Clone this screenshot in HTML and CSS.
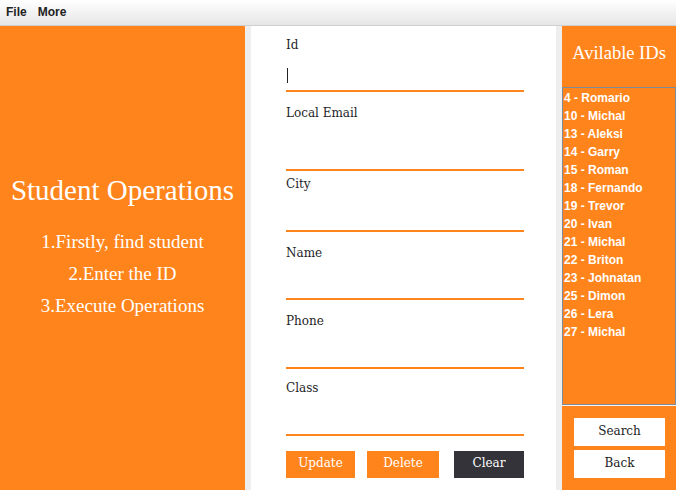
FILE: index.html
```html
<!DOCTYPE html>
<html>
<head>
<meta charset="utf-8">
<link rel="stylesheet" href="styles.css">
</head>
<body>
<div class="menubar">
  <span class="menu-item">File</span>
  <span class="menu-item">More</span>
</div>
<div class="main">
  <section class="intro">
    <h1 class="intro-title">Student Operations</h1>
    <ol class="steps">
      <li>1.Firstly, find student</li>
      <li>2.Enter the ID</li>
      <li>3.Execute Operations</li>
    </ol>
  </section>
  <div class="strip"></div>
  <section class="form">
    <div class="field"><label>Id</label><div class="input"><span class="caret"></span></div></div>
    <div class="field"><label>Local Email</label><div class="input"></div></div>
    <div class="field"><label>City</label><div class="input"></div></div>
    <div class="field"><label>Name</label><div class="input"></div></div>
    <div class="field"><label>Phone</label><div class="input"></div></div>
    <div class="field"><label>Class</label><div class="input"></div></div>
    <div class="actions">
      <button class="btn btn-update">Update</button>
      <button class="btn btn-delete">Delete</button>
      <button class="btn btn-clear">Clear</button>
    </div>
  </section>
  <div class="strip"></div>
  <aside class="ids">
    <div class="ids-head">Avilable IDs</div>
    <ul class="ids-list">
      <li>4 - Romario</li>
      <li>10 - Michal</li>
      <li>13 - Aleksi</li>
      <li>14 - Garry</li>
      <li>15 - Roman</li>
      <li>18 - Fernando</li>
      <li>19 - Trevor</li>
      <li>20 - Ivan</li>
      <li>21 - Michal</li>
      <li>22 - Briton</li>
      <li>23 - Johnatan</li>
      <li>25 - Dimon</li>
      <li>26 - Lera</li>
      <li>27 - Michal</li>
    </ul>
    <div class="ids-actions">
      <button class="side-btn">Search</button>
      <button class="side-btn">Back</button>
    </div>
  </aside>
</div>
</body>
</html>
```
FILE: styles.css
```css
* { box-sizing: border-box; }
html, body { margin: 0; padding: 0; }
body {
  width: 676px;
  height: 490px;
  overflow: hidden;
  background: #eeeeee;
  font-family: "DejaVu Serif", serif;
}
.menubar {
  height: 26px;
  display: flex;
  align-items: center;
  gap: 11px;
  padding: 0 0 2px 6px;
  background: linear-gradient(#ffffff, #e6e6e6);
  border-bottom: 1px solid #cfcfcf;
}
.menu-item {
  font-family: "Liberation Sans", Arial, sans-serif;
  font-weight: bold;
  font-size: 12px;
  color: #222;
}
.main {
  display: flex;
  height: 464px;
}
.intro {
  width: 245px;
  background: #ff841c;
  color: #fff;
  display: flex;
  flex-direction: column;
  align-items: center;
  padding-top: 147px;
  font-family: "Liberation Serif", Georgia, serif;
}
.intro-title {
  margin: 0;
  font-weight: normal;
  font-size: 29px;
  line-height: 34px;
}
.steps {
  list-style: none;
  margin: 19px 0 0;
  padding: 0;
  text-align: center;
  font-size: 19px;
  line-height: 32px;
}
.strip { width: 6px; background: #eeeeee; }
.form {
  width: 305px;
  background: #ffffff;
  padding: 12px 32px 0 35px;
  display: flex;
  flex-direction: column;
}
.field { display: flex; flex-direction: column; }
.field label {
  font-size: 12px;
  line-height: 14px;
  color: #1e1e28;
}
.input {
  height: 40px;
  border-bottom: 2px solid #ff841c;
  position: relative;
}
.caret {
  position: absolute;
  left: 1px;
  top: 16px;
  width: 1px;
  height: 15px;
  background: #222;
}
.field:nth-child(2) { margin-top: 14px; }
.field:nth-child(2) .input { height: 51px; }
.field:nth-child(3) { margin-top: 6px; }
.field:nth-child(3) .input { height: 41px; }
.field:nth-child(4) { margin-top: 14px; }
.field:nth-child(5) { margin-top: 14px; }
.field:nth-child(5) .input { height: 41px; }
.field:nth-child(6) { margin-top: 12px; }
.field:nth-child(6) .input { height: 41px; }
.actions {
  display: flex;
  margin-top: 15px;
}
.btn {
  height: 27px;
  border: none;
  padding: 0 0 3px;
  font-family: "DejaVu Serif", serif;
  font-size: 12px;
  color: #fff;
}
.btn-update { width: 69px; background: #ff841c; }
.btn-delete { width: 72px; margin-left: 12px; background: #ff841c; }
.btn-clear { width: 70px; margin-left: 15px; background: #333339; }
.ids {
  width: 114px;
  display: flex;
  flex-direction: column;
  background: #ff841c;
}
.ids-head {
  height: 61px;
  display: flex;
  align-items: center;
  justify-content: center;
  color: #fff;
  font-family: "Liberation Serif", Georgia, serif;
  font-size: 18.5px;
  padding-bottom: 6px;
}
.ids-list {
  list-style: none;
  margin: 0;
  padding: 1px 0 0 1px;
  height: 318px;
  border: 1px solid #7d8c9c;
  font-family: "Liberation Sans", Arial, sans-serif;
  font-weight: bold;
  font-size: 12px;
  line-height: 18px;
  color: #fff;
}
.ids-actions {
  flex: 1;
  border-top: 1px solid #f4f4f4;
  display: flex;
  flex-direction: column;
  gap: 4px;
  padding: 12px 0 0 12px;
}
.side-btn {
  width: 91px;
  height: 28px;
  border: none;
  background: #fff;
  font-family: "DejaVu Serif", serif;
  font-size: 12px;
  color: #222;
  padding: 0 0 3px;
}
```
